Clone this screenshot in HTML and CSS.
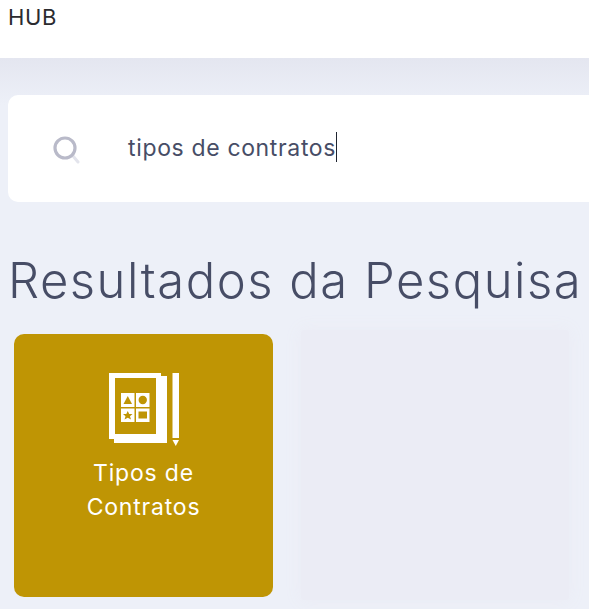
FILE: index.html
```html
<!DOCTYPE html>
<html lang="pt">
<head>
<meta charset="utf-8">
<title>HUB</title>
<link rel="stylesheet" href="styles.css">
</head>
<body>
<header class="topbar"><span class="brand">HUB</span></header>
<main class="content">
  <div class="search">
    <svg class="search-icon" width="30" height="30" viewBox="0 0 30 30" fill="none">
      <line x1="22" y1="22" x2="27" y2="28" stroke="#e3e4ec" stroke-width="3" stroke-linecap="round"/>
      <circle cx="14" cy="14" r="10" stroke="#b9bac9" stroke-width="3.2"/>
    </svg>
    <span class="query">tipos de contratos</span><span class="caret"></span>
  </div>
  <h1 class="title">Resultados da Pesquisa</h1>
  <div class="cards">
    <a class="card">
      <svg class="card-icon" width="72" height="76" viewBox="0 0 72 76" fill="none">
        <path d="M0 0H52V3H58V70H5V66H0Z" fill="#fff"/>
        <rect x="6" y="5" width="41" height="56" fill="#bf9504"/>
        <rect x="12" y="20" width="13.500" height="14" fill="#fff"/>
        <rect x="27" y="20" width="13.500" height="14" fill="#fff"/>
        <rect x="12" y="35.500" width="13.500" height="13.500" fill="#fff"/>
        <rect x="27" y="35.500" width="13.500" height="13.500" fill="#fff"/>
        <path d="M18.750 23L23 31H14.500Z" fill="#bf9504"/>
        <circle cx="33.750" cy="27" r="4.200" fill="#bf9504"/>
        <path d="M18.750 38L20.200 41H23.500L21 43.200L22 46.500L18.750 44.700L15.500 46.500L16.500 43.200L14 41H17.300Z" fill="#bf9504"/>
        <rect x="29.500" y="38.500" width="8.500" height="7" fill="#bf9504"/>
        <rect x="63.500" y="0" width="6.500" height="65" fill="#fff"/>
        <path d="M63.500 67H70L66.750 73Z" fill="#fff"/>
      </svg>
      <span class="card-label">Tipos de Contratos</span>
    </a>
    <div class="card card-empty"></div>
  </div>
</main>
</body>
</html>
```

FILE: styles.css
```css
* { box-sizing: border-box; }
html, body { margin: 0; height: 100%; overflow: hidden; }
body {
  background: linear-gradient(#e4e6f0 58px, #edf0f8 105px);
  font-family: "Inter", "Open Sans", sans-serif;
  color: #474d66;
}
.topbar {
  height: 58px;
  background: #fff;
  padding: 4px 8px 0;
}
.brand {
  font-size: 22px;
  line-height: 26px;
  letter-spacing: 0.7px;
  color: #2b2b2f;
}
.content {
  padding: 37px 0 0 8px;
}
.search {
  height: 107px;
  background: #fff;
  border-radius: 10px 0 0 10px;
  display: flex;
  align-items: center;
  padding: 0 0 4px 43px;
}
.search-icon { flex: none; margin-right: 47px; margin-top: 4px; }
.query {
  padding-top: 2px;
  font-size: 23px;
  color: #474d66;
  letter-spacing: 0.65px;
}
.caret {
  width: 1px;
  height: 30px;
  background: #1f2430;
}
.title {
  margin: 46px 0 0;
  font-weight: 300;
  font-size: 49px;
  line-height: 66px;
  letter-spacing: 1.5px;
  color: #474d66;
  white-space: nowrap;
}
.cards {
  display: flex;
  gap: 28px;
  margin: 0 8px 0 6px;
  padding-top: 20px;
}
.card {
  width: 259px;
  height: 263px;
  border-radius: 10px;
  background: #bf9504;
  display: flex;
  flex-direction: column;
  align-items: center;
  padding: 39px 50px 0;
  color: #fff;
  flex: none;
}
.card-icon { flex: none; margin-left: 3px; }
.card-label {
  margin-top: 7px;
  font-size: 23px;
  line-height: 34px;
  letter-spacing: 0.8px;
  text-align: center;
}
.card-empty {
  width: 268px;
  height: 270px;
  padding: 0;
  margin-top: -4px;
  background: #ebecf5;
  box-shadow: 0 0 16px 2px #ebecf5;
  border-radius: 4px;
}
```
